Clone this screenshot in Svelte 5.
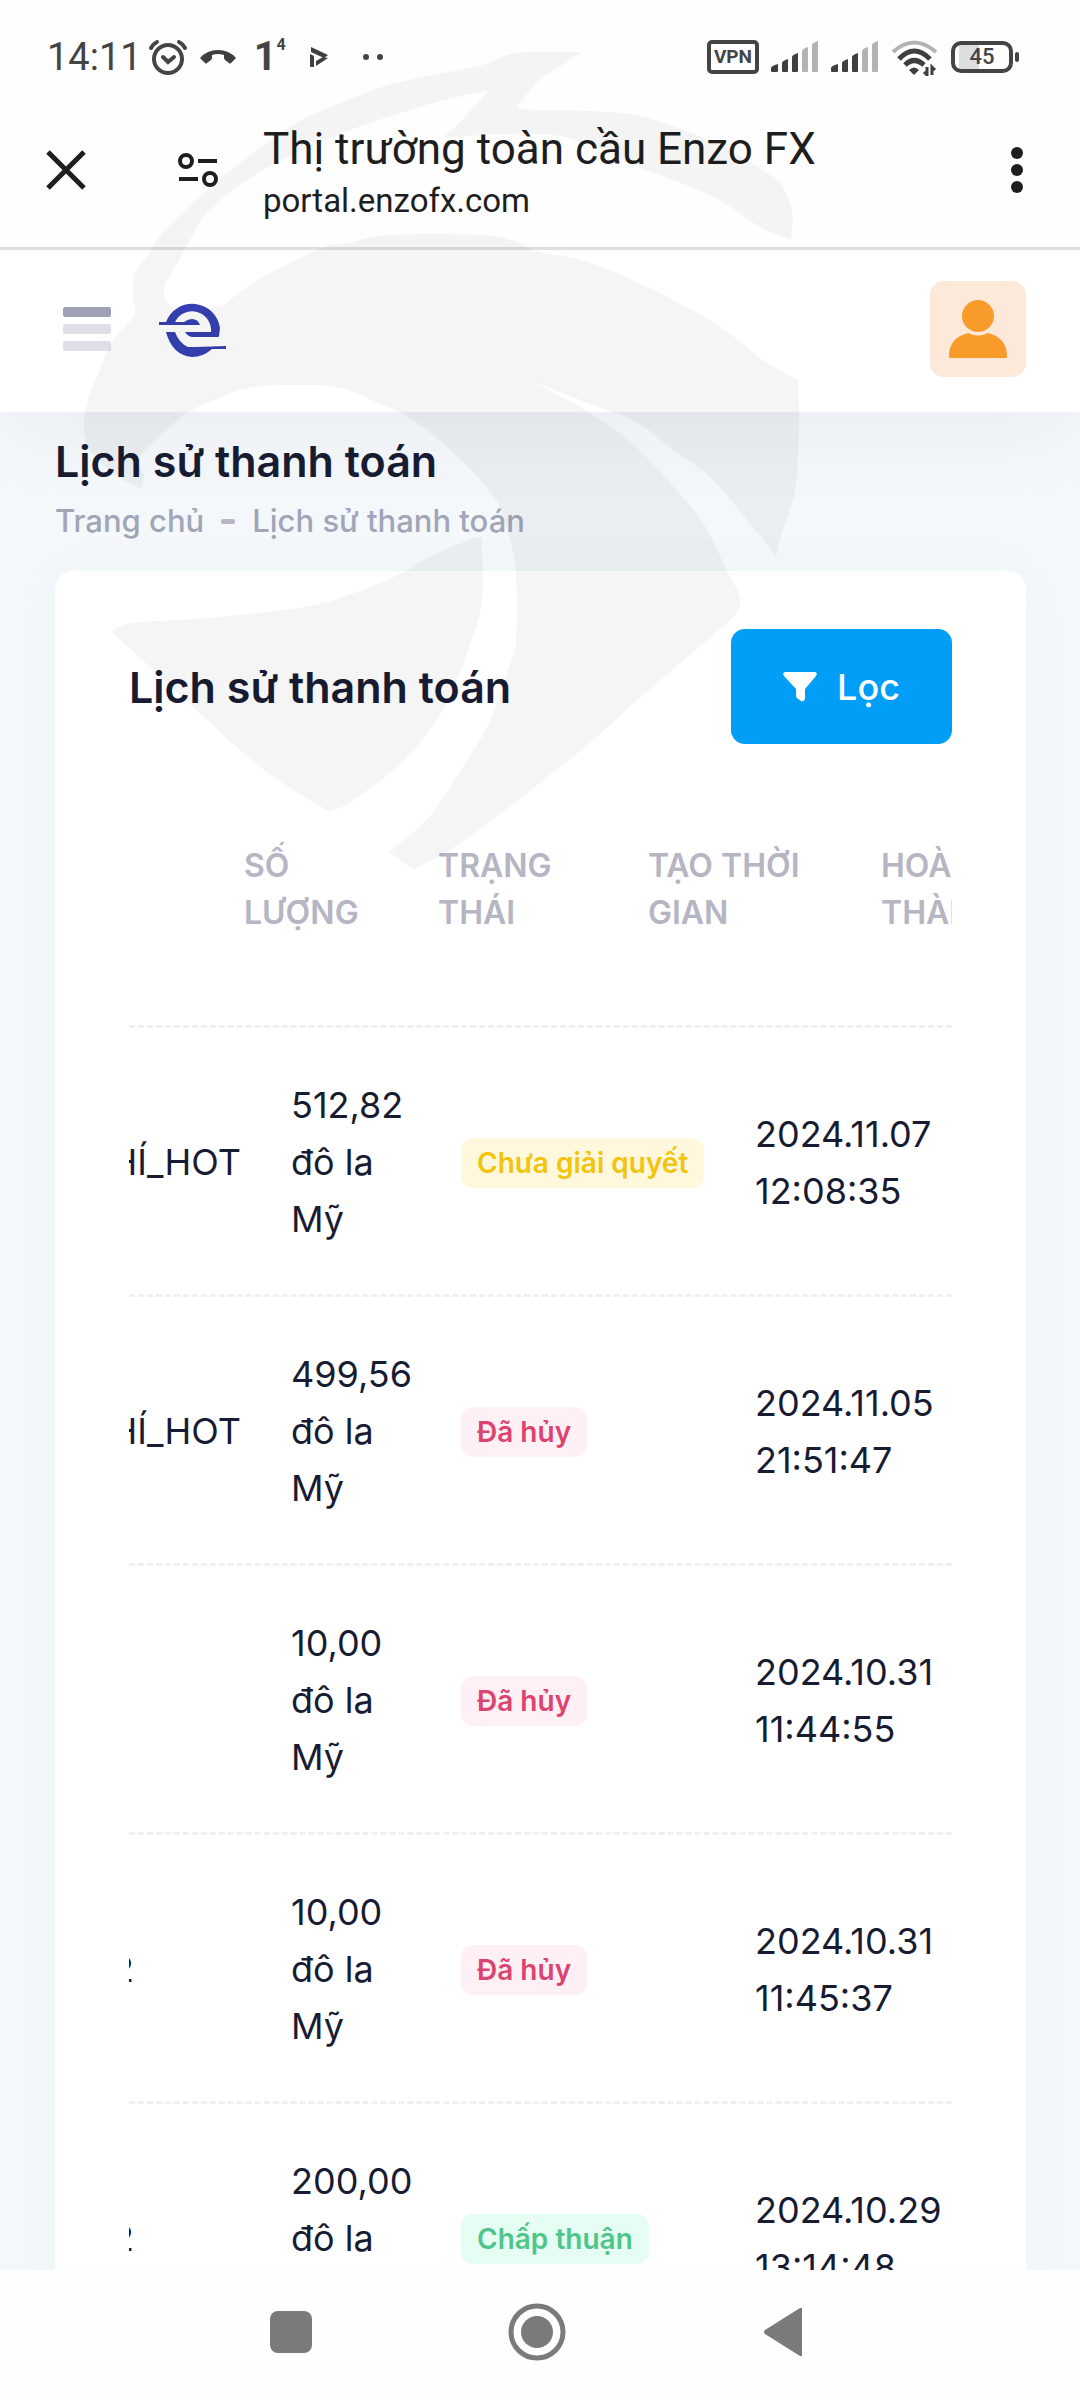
<script>
  const headings = ['', 'Số lượng', 'Trạng thái', 'Tạo thời gian', 'Hoàn thành'];

  const payments = [
    { account: 'HÍ_HOT', amount: '512,82 đô la Mỹ', status: 'Chưa giải quyết', tone: 'pending', created: '2024.11.07 12:08:35' },
    { account: 'HÍ_HOT', amount: '499,56 đô la Mỹ', status: 'Đã hủy', tone: 'cancelled', created: '2024.11.05 21:51:47' },
    { account: '', amount: '10,00 đô la Mỹ', status: 'Đã hủy', tone: 'cancelled', created: '2024.10.31 11:44:55' },
    { account: '2', short: true, amount: '10,00 đô la Mỹ', status: 'Đã hủy', tone: 'cancelled', created: '2024.10.31 11:45:37' },
    { account: '2', short: true, amount: '200,00 đô la Mỹ', status: 'Chấp thuận', tone: 'approved', created: '2024.10.29 13:14:48' }
  ];

  // Each contour is a loop of open runs; runs are smoothed, the joints between them stay sharp.
  const head = [
    [[133, 275], [151, 250], [165, 230], [207, 190], [248, 157], [296, 123], [348, 100], [396, 83], [482, 65], [516, 53], [581, 52]],
    [[581, 52], [567, 62], [540, 80], [516, 108]],
    [[516, 108], [540, 110], [623, 113], [678, 128], [730, 150], [781, 182]],
    [[781, 182], [789, 200], [793, 217], [791, 240]],
    [[791, 240], [760, 227], [719, 200], [678, 182], [640, 168], [590, 145], [540, 134], [444, 137]],
    [[444, 137], [462, 120], [489, 90]],
    [[489, 90], [441, 101], [395, 115], [330, 138], [258, 173], [210, 210], [190, 240], [178, 262], [165, 285], [167, 302], [185, 312], [225, 305]],
    [[225, 305], [240, 292], [275, 270], [325, 247], [348, 243], [389, 235], [482, 235], [516, 242], [540, 252], [585, 261], [650, 288], [719, 326], [764, 361], [798, 380]],
    [[798, 380], [799, 430], [795, 490], [781, 536], [776, 556]],
    [[776, 556], [760, 536], [712, 479], [674, 451], [636, 422], [585, 402], [534, 382]],
    [[534, 382], [585, 410], [626, 438], [667, 479], [705, 526], [726, 569], [740, 597], [736, 615]],
    [[736, 615], [712, 636], [678, 665], [633, 704], [585, 747], [540, 783], [496, 817], [450, 850], [414, 870]],
    [[414, 870], [389, 852]],
    [[389, 852], [429, 817], [461, 770], [489, 723], [507, 673], [516, 640], [516, 573], [509, 537], [496, 500], [458, 457], [413, 420], [382, 405], [341, 388], [300, 385], [248, 388], [207, 403], [182, 417], [148, 447]],
    [[148, 447], [138, 462], [144, 475], [141, 488]],
    [[141, 488], [120, 478], [90, 450], [84, 427], [88, 400], [100, 370], [112, 342], [134, 315], [133, 300], [133, 275]]
  ];
  const wing = [
    [[482, 537], [475, 537]],
    [[475, 537], [427, 558], [404, 572], [354, 593], [304, 607], [207, 618], [132, 623], [112, 632]],
    [[112, 632], [139, 657], [196, 710], [264, 770], [330, 812]],
    [[330, 812], [354, 800], [404, 760], [443, 710], [468, 650], [482, 600], [482, 537]]
  ];

  function contour(runs) {
    let d = `M${runs[0][0].join(' ')}`;
    for (const run of runs) {
      for (let i = 0; i < run.length - 1; i++) {
        const before = run[i - 1] ?? run[i];
        const from = run[i];
        const to = run[i + 1];
        const after = run[i + 2] ?? to;
        const c1 = [0, 1].map((k) => (from[k] + (to[k] - before[k]) / 6).toFixed(1));
        const c2 = [0, 1].map((k) => (to[k] - (after[k] - from[k]) / 6).toFixed(1));
        d += `C${c1.join(' ')} ${c2.join(' ')} ${to.join(' ')}`;
      }
    }
    return d + 'z';
  }
</script>

{#snippet signal()}
  <svg width="48" height="32" viewBox="0 0 48 32" aria-hidden="true">
    <g fill="#3f3f3f">
      <path d="M0 30v-3q0-2 7-4v7q0 1-1 1H1q-1 0-1-1z" />
      <path d="M11 30v-8q0-2 6-4v12q0 1-1 1h-4q-1 0-1-1z" />
      <path d="M21 30V16q0-2 6-4v18q0 1-1 1h-4q-1 0-1-1z" />
    </g>
    <g fill="#b3b3b3">
      <path d="M31 30V10q0-2 6-4v24q0 1-1 1h-4q-1 0-1-1z" />
      <path d="M41 30V4q0-2 6-4v30q0 1-1 1h-4q-1 0-1-1z" />
    </g>
  </svg>
{/snippet}

<div class="screen">
  <div class="status">
    <div class="status-left">
      <span class="clock">14:11</span>
      <svg width="40" height="38" viewBox="0 0 40 38" fill="none" stroke="#444" stroke-linecap="round" aria-hidden="true">
        <circle cx="20" cy="21" r="14" stroke-width="4" />
        <path d="M15 19l5 5 6-5" stroke-width="4" />
        <path d="M3 10Q5 6 9 4M37 10Q35 6 31 4" stroke-width="4" />
      </svg>
      <svg class="call" width="36" height="16" viewBox="0 0 36 16" fill="#3f3f3f" aria-hidden="true">
        <path d="M0 9Q7 1 18 1t18 8l-5 5q-1 1-2 0l-4-3q-1-1-1-2V6q-6-2-12 0v3q0 1-1 2l-4 3q-1 1-2 0z" />
      </svg>
      <span class="count">1<sup>4</sup></span>
      <svg width="20" height="22" viewBox="0 0 20 22" fill="#3f3f3f" aria-hidden="true">
        <path d="M1 1l17 8-4 3L1 6zM0 8l4 2v11H1q-1 0-1-1zM18 12L6 20v-5l7-4z" />
      </svg>
      <svg class="more" width="22" height="8" viewBox="0 0 22 8" fill="#444" aria-hidden="true">
        <circle cx="4" cy="4" r="3" /><circle cx="18" cy="4" r="3" />
      </svg>
    </div>
    <div class="status-right">
      <span class="vpn">VPN</span>
      {@render signal()}
      {@render signal()}
      <svg width="48" height="38" viewBox="0 0 48 38" fill="none" stroke-width="4" aria-hidden="true">
        <path d="M2 14Q23-5 45 14" stroke="#b3b3b3" />
        <path d="M8 21Q23 5 39 21M14 27Q23 18 33 27" stroke="#3f3f3f" stroke-width="5" />
        <path d="M18 32q5-5 10 0l-5 5z" fill="#3f3f3f" />
        <path d="M36 29v8l-3-3M41 37v-8l3 3" stroke="#3f3f3f" stroke-width="3" />
      </svg>
      <span class="battery">45</span>
    </div>
  </div>

  <div class="browser">
    <button class="plain" aria-label="Đóng">
      <svg width="40" height="40" viewBox="0 0 40 40" stroke="#1e1e1e" stroke-width="5" aria-hidden="true"><path d="M2 2l36 36M38 2L2 38" /></svg>
    </button>
    <button class="plain site" aria-label="Thông tin trang web">
      <svg width="42" height="36" viewBox="0 0 42 36" fill="none" stroke="#1e1e1e" stroke-width="4" aria-hidden="true">
        <circle cx="9" cy="9" r="6" /><path d="M21 9h19M2 27h19" /><circle cx="33" cy="27" r="6" />
      </svg>
    </button>
    <div class="address">
      <div class="page-name">Thị trường toàn cầu Enzo FX</div>
      <div class="url">portal.enzofx.com</div>
    </div>
    <button class="plain" aria-label="Tùy chọn khác">
      <svg width="12" height="46" viewBox="0 0 12 46" fill="#1e1e1e" aria-hidden="true">
        <circle cx="6" cy="6" r="6" /><circle cx="6" cy="23" r="6" /><circle cx="6" cy="40" r="6" />
      </svg>
    </button>
  </div>

  <div class="portal">
    <header class="topbar">
      <button class="plain" aria-label="Menu">
        <svg width="48" height="44" viewBox="0 0 48 44" aria-hidden="true">
          <rect width="48" height="10" rx="2" fill="#a1a1b6" />
          <rect y="17" width="48" height="10" rx="2" fill="#dfdfe8" />
          <rect y="34" width="48" height="10" rx="2" fill="#dfdfe8" />
        </svg>
      </button>
      <a class="brand" href="#home" aria-label="Enzo FX">
        <svg width="68" height="58" viewBox="0 0 68 58" fill="#3640b4" aria-hidden="true">
          <path d="M0 22h7A28 28 0 0 1 61 28l-1 8q0 1-1 1H34q-5 0-8-5h26A19 19 0 0 0 16 22h9q4-3 8-3 6 0 8 6H0z" />
          <path d="M7 32h9q4 11 13 15h8l30-1v3H53q-9 8-20 8Q13 55 7 32z" />
        </svg>
      </a>
      <button class="plain avatar" aria-label="Tài khoản">
        <svg width="58" height="60" viewBox="0 0 58 60" fill="#f99b2a" aria-hidden="true">
          <circle cx="29" cy="17" r="16" />
          <path d="M19 34q10 5 20 0 19 5 19 23v2H0v-2q0-18 19-23z" />
        </svg>
      </button>
    </header>

    <main>
      <h1>Lịch sử thanh toán</h1>
      <nav class="crumbs" aria-label="Breadcrumb">
        <a href="#home">Trang chủ</a>
        <span class="dash"></span>
        <span>Lịch sử thanh toán</span>
      </nav>

      <section class="card">
        <div class="card-head">
          <h2>Lịch sử thanh toán</h2>
          <button class="filter">
            <svg width="34" height="30" viewBox="0 0 34 30" fill="#fff" aria-hidden="true">
              <path d="M2 0h30q3 1 1 4L22 17v10q-1 3-4 2l-4-3q-1-1-1-2v-7L1 4Q-1 1 2 0z" />
            </svg>
            Lọc
          </button>
        </div>
        <div class="table-wrap">
          <table>
            <thead>
              <tr>
                {#each headings as heading}
                  <th scope="col">{heading}</th>
                {/each}
              </tr>
            </thead>
            <tbody>
              {#each payments as row}
                <tr>
                  <td class="account" class:short={row.short}>{row.account}</td>
                  <td>{row.amount}</td>
                  <td class="state"><span class="badge {row.tone}">{row.status}</span></td>
                  <td>{row.created}</td>
                </tr>
              {/each}
            </tbody>
          </table>
        </div>
      </section>
    </main>
  </div>

  <nav class="system" aria-label="Điều hướng hệ thống">
    <button class="plain" aria-label="Gần đây">
      <svg width="58" height="58" viewBox="0 0 58 58" fill="#7a7a7a" aria-hidden="true"><rect x="8" y="8" width="42" height="42" rx="8" /></svg>
    </button>
    <button class="plain" aria-label="Trang chính">
      <svg width="58" height="58" viewBox="0 0 58 58" fill="none" stroke="#7a7a7a" aria-hidden="true">
        <circle cx="29" cy="29" r="26" stroke-width="5" /><circle cx="29" cy="29" r="16" fill="#7a7a7a" stroke="none" />
      </svg>
    </button>
    <button class="plain" aria-label="Quay lại">
      <svg width="58" height="58" viewBox="0 0 58 58" fill="#7a7a7a" aria-hidden="true"><path d="M46 5q2-1 2 1v46q0 2-2 1L11 31q-2-2 0-4z" /></svg>
    </button>
  </nav>

  <svg class="watermark" width="830" height="890" viewBox="0 0 830 890" aria-hidden="true">
    <path d={contour(head)} />
    <path d={contour(wing)} />
  </svg>
</div>

<style>
  :global(body) {
    margin: 0;
    background: #fefefe;
  }
  .screen {
    position: relative;
    display: flex;
    flex-direction: column;
    height: 100vh;
    overflow: hidden;
    background: #fefefe;
    font-family: Inter, "Liberation Sans", sans-serif;
    color: #181c32;
  }
  svg {
    display: block;
    flex: none;
  }
  .plain {
    display: flex;
    padding: 0;
    border: 0;
    background: none;
  }
  .watermark {
    position: absolute;
    top: 0;
    left: 0;
    fill: rgba(0, 0, 0, 0.04);
    pointer-events: none;
  }

  /* status bar */
  .status {
    display: flex;
    justify-content: space-between;
    align-items: center;
    height: 114px;
    padding: 0 67px 0 47px;
    box-sizing: border-box;
    font-family: Roboto, sans-serif;
    color: #444;
  }
  .status-left,
  .status-right {
    display: flex;
    align-items: center;
  }
  .status-left {
    gap: 6px;
  }
  .status-right {
    gap: 12px;
  }
  .clock {
    font-size: 38px;
    line-height: 44px;
  }
  .call {
    margin-left: 6px;
  }
  .count {
    display: flex;
    align-items: flex-start;
    margin: 0 18px 0 12px;
    font-size: 40px;
    line-height: 44px;
    font-weight: 700;
  }
  .count sup {
    font-size: 16px;
    line-height: 20px;
  }
  .more {
    margin-left: 26px;
  }
  .vpn {
    padding: 0 3px;
    border: 4px solid #444;
    border-radius: 5px;
    font-size: 19px;
    line-height: 26px;
    font-weight: 700;
  }
  .battery {
    position: relative;
    width: 54px;
    border: 4px solid #444;
    border-radius: 10px;
    background: linear-gradient(90deg, #fff 4px, #ddd 4px, #ddd 24px, #fff 24px);
    font-size: 22px;
    line-height: 24px;
    font-weight: 500;
    text-align: center;
  }
  .battery::after {
    content: "";
    position: absolute;
    top: 7px;
    right: -10px;
    width: 4px;
    height: 10px;
    border-radius: 2px;
    background: #444;
  }

  /* browser toolbar */
  .browser {
    display: flex;
    align-items: center;
    height: 136px;
    padding: 0 57px 22px 46px;
    box-sizing: border-box;
    border-bottom: 3px solid #dfdfdf;
    font-family: Roboto, sans-serif;
    color: #1e1e1e;
  }
  .site {
    margin: 0 44px 0 91px;
  }
  .address {
    flex: 1;
    min-width: 0;
    padding-top: 3px;
  }
  .page-name {
    font-size: 44px;
    line-height: 60px;
  }
  .url {
    font-size: 33px;
    line-height: 44px;
  }

  /* portal */
  .portal {
    flex: 1;
    min-height: 0;
    overflow: hidden;
    background: #f4f8fb;
  }
  .topbar {
    display: flex;
    align-items: center;
    height: 162px;
    padding: 0 54px 4px 63px;
    box-sizing: border-box;
    background: #fff;
    box-shadow: 0 28px 82px rgba(82, 63, 105, 0.05);
  }
  .brand {
    margin-left: 48px;
  }
  .avatar {
    margin-left: auto;
    padding: 18px 19px;
    border-radius: 14px;
    background: #fce9da;
  }
  main {
    padding: 19px 54px 0 55px;
  }
  h1,
  h2 {
    margin: 0;
    font-size: 43px;
    line-height: 60px;
    font-weight: 600;
  }
  .crumbs {
    display: flex;
    align-items: center;
    gap: 17px;
    margin-bottom: 20px;
    font-size: 31px;
    line-height: 60px;
    font-weight: 500;
    color: #a1a5b7;
  }
  .crumbs a {
    color: inherit;
    text-decoration: none;
  }
  .dash {
    width: 14px;
    height: 5px;
    border-radius: 2px;
    background: #b5b5c3;
  }
  .card {
    padding: 58px 74px;
    border-radius: 18px;
    background: #fff;
    box-shadow: 0 0 56px rgba(76, 87, 125, 0.03);
  }
  .card-head {
    display: flex;
    justify-content: space-between;
    align-items: center;
    margin-bottom: 98px;
  }
  .filter {
    display: flex;
    align-items: center;
    gap: 20px;
    height: 115px;
    padding: 0 52px;
    border: 0;
    border-radius: 14px;
    background: #009ef7;
    color: #fff;
    font: 500 36px/56px Inter, sans-serif;
  }
  .table-wrap {
    overflow: hidden;
  }
  table,
  thead,
  tbody {
    display: block;
  }
  tr {
    display: grid;
    align-items: center;
    border-bottom: 3px dashed #f0f0f3;
  }
  thead tr {
    grid-template-columns: 115px 194px 210px 233px 160px;
    padding-bottom: 89px;
  }
  th {
    padding: 0 40px 0 0;
    font-size: 32px;
    line-height: 47px;
    font-weight: 600;
    text-align: left;
    text-transform: uppercase;
    color: #b5b5c3;
  }
  tbody tr {
    grid-template-columns: 137px 170px 294px minmax(222px, 1fr);
    padding: 49px 0 46px;
  }
  td {
    padding: 0 25px;
    font-size: 36px;
    line-height: 57px;
  }
  .account {
    display: flex;
    justify-content: flex-end;
    min-height: 57px;
    padding-left: 0;
    overflow: hidden;
  }
  .short {
    padding-right: 132px;
  }
  .state {
    display: flex;
    align-items: center;
  }
  .badge {
    padding: 0 16px;
    border-radius: 12px;
    font-size: 28px;
    line-height: 50px;
    font-weight: 600;
    white-space: nowrap;
  }
  .pending {
    background: #fff8dd;
    color: #f1c40f;
  }
  .cancelled {
    background: #fff0f5;
    color: #dc4470;
  }
  .approved {
    background: #e6fdf3;
    color: #50c58a;
  }

  /* system navigation */
  .system {
    display: flex;
    justify-content: center;
    align-items: center;
    gap: 188px;
    height: 130px;
    padding: 0 6px 6px 0;
    box-sizing: border-box;
    background: #fefefe;
  }
</style>
